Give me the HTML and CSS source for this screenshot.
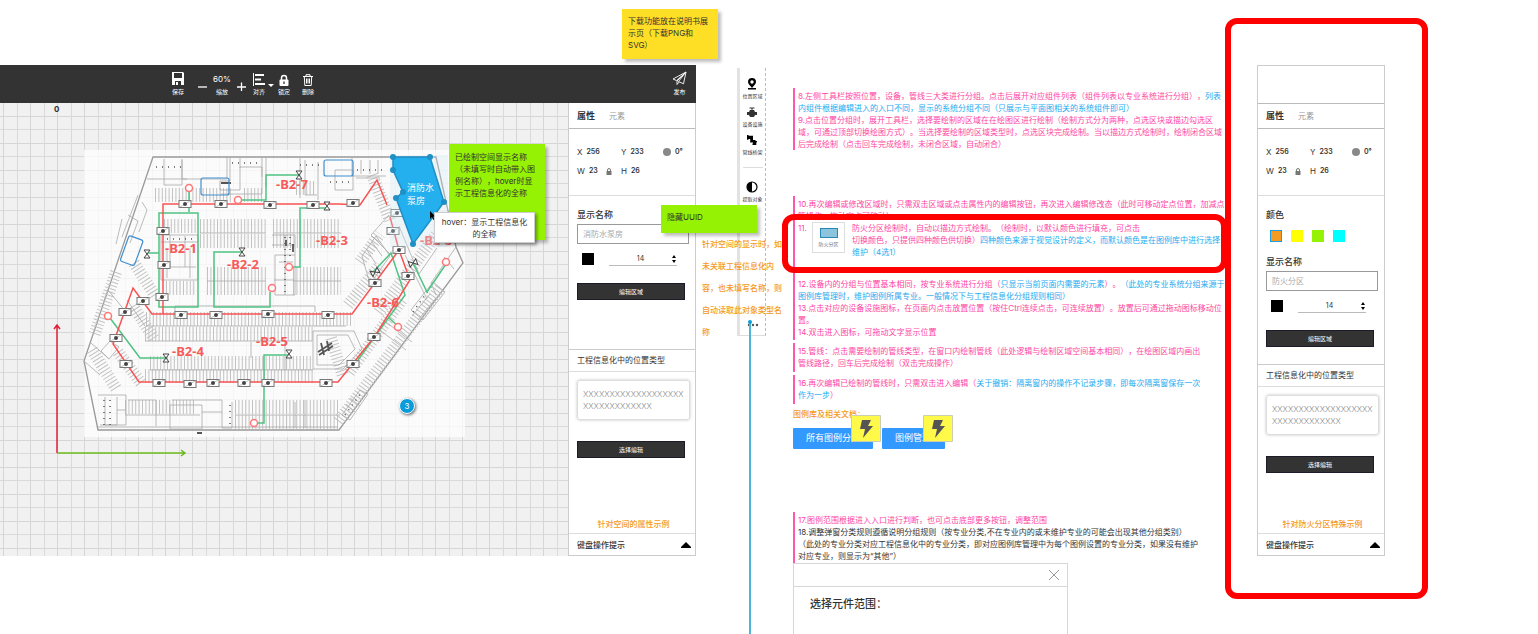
FILE: index.html
```html
<!DOCTYPE html>
<html lang="zh-CN">
<head>
<meta charset="utf-8">
<title>图例编辑器说明</title>
<link rel="stylesheet" href="styles.css">
</head>
<body>
<main class="board">
  <section class="editor">
    <header class="toolbar">
      <button class="tool save"><svg width="14" height="14" viewBox="0 0 14 14"><path fill="#fff" d="M1 0h11l1 1v12H1z"/><path fill="#333" d="M3 1h8v5H3zM4 9h6v4H4z"/><path fill="#fff" d="M5 10h2v3H5z"/></svg><span>保存</span></button>
      <button class="tool" aria-label="缩小"><svg width="9" height="9" viewBox="0 0 9 9"><path stroke="#fff" stroke-width="1.3" d="M0 5h9"/></svg></button>
      <div class="tool zoom"><output>60%</output><span>缩放</span></div>
      <button class="tool plus" aria-label="放大"><svg width="9" height="9" viewBox="0 0 9 9"><path stroke="#fff" stroke-width="1.3" d="M0 5h9M4.500 .5v9"/></svg></button>
      <button class="tool align"><svg width="14" height="13" viewBox="0 0 14 13"><path stroke="#fff" d="M1.500 0v13"/><path stroke="#fff" stroke-width="2" d="M3 2h9M3 6.500h6M3 11h10"/></svg><span>对齐</span></button>
      <button class="tool caret" aria-label="对齐选项"><svg width="6" height="4" viewBox="0 0 6 4"><path fill="#fff" d="M0 0h6L3 3z"/></svg></button>
      <button class="tool lock"><svg width="12" height="12" viewBox="0 0 12 12"><path fill="none" stroke="#fff" stroke-width="1.500" d="M3.500 6V4a2.500 2.500 0 0 1 5 0v2"/><rect x="1.500" y="5.500" width="9" height="6.500" rx="1" fill="#fff"/><path stroke="#333" stroke-width="1.300" d="M6 7.500v2.500"/></svg><span>锁定</span></button>
      <button class="tool trash"><svg width="12" height="12" viewBox="0 0 12 12"><path fill="none" stroke="#fff" d="M1 2.500h10M4 2.500V.7h4v1.800M2.300 2.500l.5 9h6.400l.5-9M4.500 4.500v5M6 4.500v5M7.500 4.500v5"/></svg><span>删除</span></button>
      <button class="tool publish"><svg width="15" height="15" viewBox="0 0 15 15"><path fill="none" stroke="#fff" stroke-width=".9" stroke-linejoin="round" d="M14 1 1 8l3.500 1.600L14 1 6.500 10.500l5 2.300L14 1 5 10v3.500l2.200-2.500"/></svg><span>发布</span></button>
    </header>
    <div class="workspace">
      <div class="canvas">
        <svg class="plan" viewBox="0 103 568 453" width="568" height="453">
          <defs>
            <g id="box"><rect x="-6" y="-3.500" width="12" height="7" fill="#fff" stroke="#777"/><path d="M-6 3.500 6-3.500" stroke="#999" stroke-width=".6"/><circle r="2" fill="#444"/></g>
            <g id="valve" fill="#fff" stroke="#444"><path d="M-3-4h6L-3 4h6z"/></g>
            <circle id="ring" r="3.500" fill="#fff" stroke="#f77" stroke-width="1.500"/>
          </defs>
          <rect x="84" y="150" width="381" height="287" fill="#fff" opacity=".72"/>
          <g fill="none" stroke="#aaa">
            <path stroke="#999" stroke-width="1.300" d="M153 157H436L456 247l7 16L339 430H98L84 361z"/>
            <g stroke="#c2c2c2" stroke-dasharray="1 2.400">
              <path stroke-width="14" d="M155 195h77M244 195h18M296 188h20M200 226h66M200 241h66M273 226h68M273 241h68M207 274h59M207 288h59M293 274h48M293 288h48M166 288h30M146 319h206M145 334h168M150 363h163M145 376h168M125 407h70M235 407h105M235 422h103M164 226h32"/>
              <path stroke-width="12" d="M134 263l22 34M116 272l-22 64M133 306l22 34M118 352l23 31M92 350l25 40M372 175l18 45M360 262l20-28M348 305l32-40M436 235l-58 78M402 300l-54 74M440 288l-102 134M331 338l12 38"/>
            </g>
            <g stroke="#aaa" stroke-width=".8">
              <path d="M164 159v26h18v-26M147 179h40M182 160v19h45v-22M230 157v24h-10v9h20v-23h22v27h-41M240 168v-10M262 157v20M266 157v30M300 158v40M305 160v35h12M318 162v38M335 170h18v20h-18zM352 158v18h34M356 178h24M361 160v14M370 160v14M378 160v14"/>
              <path d="M161 235h37v45h-37zM161 242h37M170 235v32h26M185 236v31M167 248v30M190 248v30M272 235h23v60h-20v-40h20M272 245h23M285 235v60M279 262h14M274 280h20"/>
              <path d="M200 233h66M273 233h68M207 281h59M293 281h48M146 326h200M145 341h167M150 370h163M125 415h75M235 415h105M98 427h240M175 312v-6h140v6M251 342v16M285 342v28M145 326l-18-26"/>
              <path d="M98 395h28v30h-26M105 397v28h12v-28M117 410h8M128 400h28v26M170 405h32v24h-32zM172 400h50v28h10v-26M222 412h-20M295 402v26M305 400v28M110 341l9 6-10 12-8-8zM91 343l17 15M84 361l16 14M108 290l18 22M138 195l-16 42M142 202l5 8-8 22M128 215l10 6-8 22M122 219l-6 25"/>
              <path d="M313 331h41l8 18-19 20h-30zM317 335h31l7 14-16 16h-22zM362 256l14-20 14 20-20 28zM372 242l10 14M367 250l9 14M389 215l-18 20 20 20M399 226l20 48 18-26M405 255l22 44M411 310l22-28 12 10-22 28zM412 316l18-22M418 320l18-22M456 247l-25 36 5 12M444 257l10 12M360 390l-18 25 8 5 18-26zM350 398l10 8M346 404l9 8M380 330l26 20M386 322l26 20"/>
            </g>
            <g stroke="#555" stroke-width="1.500">
              <path stroke-dasharray="1 5" d="M156 167h25M232 163h30M300 165h20M330 182h22M104 400v26M110 400v26M230 405v20M357 170h25M285 237v56M290 237v20M413 312l20-28M345 415l16-22M167 239h26"/>
              <path d="M318 352l14-9M319 355l14-9M321 343l3 12M327 341l2 10M286 240v6M293 244v8M221 183h10M197 433h5" stroke-width="1.800"/>
            </g>
          </g>
          <g fill="none" stroke="#3f8dcf" stroke-width="1.200">
            <rect x="201" y="178" width="28" height="17" rx="2"/><rect x="324" y="160" width="29" height="16" rx="2"/><rect x="-7" y="-14" width="15" height="27" rx="2" transform="translate(131 251) rotate(20)"/>
          </g>
          <g fill="none" stroke="#4fc383" stroke-width="1.500">
            <path d="M189 190v22M159 213h39v94h-39zM147 253h12M242 252h-28v55h56v-15M299 175h-33v25h-26M327 208h-27v59h-9M110 318l30 40h26M289 355h-25v68h-8M373 272l18-19 14 42-47 65M389 318l9 8M413 263l14 29 19-28"/>
          </g>
          <g fill="none" stroke="#f75353" stroke-width="1.500">
            <path d="M163 314V204h176l21 1 17-25 10 25M390 217l9 33 11 30-35 56-37 46H139l-26-38 20-56 19 26h200l47-64"/>
          </g>
          <g>
            <use href="#box" x="185" y="204"/><use href="#box" x="221" y="204"/><use href="#box" x="270" y="205"/><use href="#box" x="313" y="205"/><use href="#box" x="353" y="203"/><use href="#box" x="163" y="231"/><use href="#box" x="164" y="265"/><use href="#box" x="162" y="297"/><use href="#box" x="143" y="301"/><use href="#box" x="125" y="312"/><use href="#box" x="116" y="338"/><use href="#box" x="126" y="364"/><use href="#box" x="181" y="315"/><use href="#box" x="216" y="315"/><use href="#box" x="268" y="314"/><use href="#box" x="328" y="315"/><use href="#box" x="159" y="383"/><use href="#box" x="190" y="384"/><use href="#box" x="213" y="383"/><use href="#box" x="244" y="383"/><use href="#box" x="268" y="383"/><use href="#box" x="326" y="383"/><use href="#box" x="397" y="213"/><use href="#box" x="393" y="231"/><use href="#box" x="399" y="250"/><use href="#box" x="408" y="276"/><use href="#box" x="375" y="283"/><use href="#box" x="374" y="337"/><use href="#box" x="353" y="364"/>
            <use href="#valve" x="147" y="254"/><use href="#valve" x="242" y="252"/><use href="#valve" x="299" y="175"/><use href="#valve" x="327" y="206"/><use href="#valve" x="166" y="358"/><use href="#valve" x="289" y="354"/><use href="#valve" transform="translate(375 272) rotate(60)"/><use href="#valve" transform="translate(413 263) rotate(70)"/>
            <use href="#ring" x="189" y="188"/><use href="#ring" x="238" y="200"/><use href="#ring" x="289" y="267"/><use href="#ring" x="272" y="288"/><use href="#ring" x="108" y="316"/><use href="#ring" x="254" y="423"/><use href="#ring" x="398" y="327"/><use href="#ring" x="446" y="262"/>
          </g>
          <g class="zone-label">
            <text x="276" y="189">-B2-7</text><text x="165" y="253">-B2-1</text><text x="227" y="269">-B2-2</text><text x="316" y="245">-B2-3</text><text x="172" y="356">-B2-4</text><text x="256" y="346">-B2-5</text><text x="367" y="307">-B2-6</text><text x="420" y="245">-B2-8</text>
          </g>
          <rect x="390" y="155" width="58" height="92" fill="#cfe9f5" opacity=".3"/>
          <path d="M393 157h37l14 45-31 42-17-46 7-6-10-22z" fill="#24afee" stroke="#1f8fc4" stroke-width="1.500"/>
          <g fill="#1f8fc4"><circle cx="393" cy="157" r="3"/><circle cx="430" cy="157" r="3"/><circle cx="444" cy="202" r="3"/><circle cx="413" cy="244" r="3"/><circle cx="396" cy="198" r="3"/><circle cx="403" cy="192" r="3"/><circle cx="393" cy="170" r="3"/></g>
          <g class="room-label"><text x="407" y="191">消防水</text><text x="407" y="204">泵房</text></g>
          <path fill="none" stroke="#e0203a" stroke-width="1.500" d="M57 453V326M54 329l3-4 3 4"/>
          <path fill="none" stroke="#6cba1c" stroke-width="1.500" d="M57 453h127M181 450l4 3-4 3"/>
          <text class="origin" x="54" y="112">0</text>
          <path d="M430 211v8l2-2 1.500 3 1-.6-1.400-2.700h2.500z"/>
        </svg>
        <p class="sticky green tip-note">已绘制空间显示名称<br>（未填写时自动带入图<br>例名称），hover时显<br>示工程信息化的全称</p>
        <div class="tooltip">hover：显示工程信息化<br>的全称</div>
        <span class="marker">3</span>
      </div>
      <aside class="panel">
        <nav class="tabs"><button class="tab active">属性</button><button class="tab">元素</button></nav>
        <div class="geometry">
          <span>X <b>256</b></span><span>Y <b>233</b></span><span><i class="dot"></i><b>0°</b></span>
          <span>W <b>23</b><svg class="padlock" width="6" height="7" viewBox="0 0 6 7"><path fill="none" stroke="#777" d="M1.500 3V2a1.500 1.500 0 0 1 3 0v1"/><path fill="#777" d="M.5 3h5v4h-5z"/></svg></span><span>H <b>26</b></span>
        </div>
        <div class="fields">
          <label class="caption" for="name-a">显示名称</label>
          <input class="name" id="name-a" placeholder="消防水泵房">
          <div class="type-row"><button class="ink" aria-label="文字颜色"></button><div class="size"><input aria-label="字号" value="14"><svg width="4" height="8" viewBox="0 0 4 8"><path d="M0 3h4L2 0zM0 5h4L2 8z"/></svg></div></div>
          <button class="dark">编辑区域</button>
        </div>
        <label class="band" for="type-a">工程信息化中的位置类型</label>
        <div class="kind">
          <textarea id="type-a">XXXXXXXXXXXXXXXXXXX
XXXXXXXXXXXXX</textarea>
          <button class="dark">选择编辑</button>
          <p class="example">针对空间的属性示例</p>
        </div>
        <button class="shortcuts">键盘操作提示<svg width="10" height="6" viewBox="0 0 10 6"><path d="M0 6V5l5-5 5 5v1z"/></svg></button>
      </aside>
    </div>
    <p class="sticky yellow">下载功能放在说明书展<br>示页（下载PNG和<br>SVG）</p>
  </section>

  <section class="strip">
    <div class="strip-box">
      <button><svg width="10" height="12" viewBox="0 0 10 12"><path d="M5 0a4 4 0 0 1 4 4c0 2-2.500 4-4 6C3.500 8 1 6 1 4a4 4 0 0 1 4-4z"/><circle cx="5" cy="4" r="1.700" fill="#fff"/><path d="M1 10h8v1.500H1z"/></svg>位置区域</button>
      <button><svg width="10" height="12" viewBox="0 0 10 12"><path fill="#333" d="M2.500 1.500h5v1h-2V4H7l1 2h2v3H8l-1 2H3L2 9H0V6h2l1-2h1.500V2.500h-2z"/></svg>设备设施</button>
      <button><svg width="10" height="12" viewBox="0 0 10 12"><path d="M0 1h1.500v.7H6V6h2.500v1H10v1.200h-.7V11H5.500V9.500H6V8.500H3.200V5H1.500v.7H0z"/></svg>管线桥架</button>
      <hr>
      <button><svg width="12" height="12" viewBox="0 0 12 12"><circle cx="6" cy="6" r="5" fill="#fff" stroke="#000" stroke-width="1.200"/><path d="M6 1a5 5 0 0 0 0 10z"/></svg>提取对象</button>
      <button class="more" aria-label="更多"><svg width="12" height="4" viewBox="0 0 12 4"><circle cx="2" cy="2" r="1.200" fill="#555"/><circle cx="6" cy="2" r="1.200" fill="#555"/><circle cx="10" cy="2" r="1.200" fill="#555"/></svg></button>
    </div>
    <i class="connector"></i>
    <p class="sticky green uuid">隐藏UUID</p>
    <p class="remark">针对空间的显示时，如<br>未关联工程信息化内<br>容，也未填写名称，则<br>自动读取此对象类型名<br>称</p>
  </section>

  <article class="notes">
    <div class="note first">8.左侧工具栏按照位置，设备，管线三大类进行分组。点击后展开对应组件列表（组件列表以专业系统进行分组），<em>列表<br>内组件根据编辑进入的入口不同，显示的系统分组不同（只展示与平面图相关的系统组件即可）</em><br>9.点击位置分组时，展开工具栏，选择要绘制的区域在在绘图区进行绘制（绘制方式分为两种，点选区块或描边勾选区<br>域，可通过顶部切换绘图方式）。当选择要绘制的区域类型时，点选区块完成绘制。当以描边方式绘制时，绘制闭合区域<br>后完成绘制（点击回车完成绘制，未闭合区域，自动闭合）</div>
    <div class="note second">
      <p>10.再次编辑或修改区域时，只需双击区域或点击属性内的编辑按钮，再次进入编辑修改态（此时可移动定点位置，加减点<br>等操作，拖动定点可移动）</p>
      <div class="item">
        <span class="num">11.</span>
        <figure class="thumb"><i></i><figcaption>防火分区</figcaption></figure>
        <p>防火分区绘制时，自动以描边方式绘制。（绘制时，以默认颜色进行填充，可点击<br>切换颜色，只提供四种颜色供切换）<em>四种颜色来源于视觉设计的定义，而默认颜色是在图例库中进行选择<br>维护（4选1）</em></p>
        <i class="frame"></i>
      </div>
      <p>12.设备内的分组与位置基本相同，按专业系统进行分组（<em>只显示当前页面内需要的元素</em>）。<em>（此处的专业系统分组来源于<br>图例库管理时，维护图例所属专业。一般情况下与工程信息化分组规则相同）</em><br>13.点击对应的设备设施图标，在页面内点击放置位置（按住Ctrl连续点击，可连续放置）。放置后可通过拖动图标移动位<br>置。<br>14.双击进入图标，可拖动文字显示位置</p>
    </div>
    <div class="note short">15.管线：点击需要绘制的管线类型，在窗口内绘制管线（此处逻辑与绘制区域空间基本相同），在绘图区域内画出<br>管线路径，回车后完成绘制（双击完成操作）</div>
    <div class="note short">16.再次编辑已绘制的管线时，只需双击进入编辑（<em>关于撤销：隔离窗内的操作不记录步骤，即每次隔离窗保存一次<br>作为一步</em>）</div>
    <p class="docs">图例库及相关文档：</p>
    <div class="links">
      <a href="#all" class="wide">所有图例分类<svg class="bolt" width="30" height="27" viewBox="0 0 30 27"><path fill="#fff94a" stroke="#cdcdb4" d="M.5.5h29v26H.5z"/><path fill="#555" d="M11 5h9l-3 6h5L12 23l2-9H9z"/></svg></a>
      <a href="#manage">图例管理<svg class="bolt" width="30" height="27" viewBox="0 0 30 27"><path fill="#fff94a" stroke="#cdcdb4" d="M.5.5h29v26H.5z"/><path fill="#555" d="M11 5h9l-3 6h5L12 23l2-9H9z"/></svg></a>
    </div>
    <div class="note last">17.图例范围根据进入入口进行判断，也可点击底部更多按钮，调整范围<br><span class="plain">18.调整弹窗分类规则遵循说明分组规则（按专业分类,不在专业内的或未维护专业的可能会出现其他分组类别）<br>（此处的专业分类对应工程信息化中的专业分类，即对应图例库管理中为每个图例设置的专业分类，如果没有维护<br>对应专业，则显示为“其他”）</span></div>
    <div class="dialog">
      <header><button aria-label="关闭"><svg width="10" height="10" viewBox="0 0 10 10"><path stroke="#999" d="M0 0l10 10M10 0 0 10"/></svg></button></header>
      <h2>选择元件范围：</h2>
    </div>
  </article>

  <section class="variant">
    <i class="frame tall"></i>
    <aside class="panel boxed">
      <div class="blank"></div>
      <nav class="tabs"><button class="tab active">属性</button><button class="tab">元素</button></nav>
      <div class="geometry">
        <span>X <b>256</b></span><span>Y <b>233</b></span><span><i class="dot"></i><b>0°</b></span>
        <span>W <b>23</b><svg class="padlock" width="6" height="7" viewBox="0 0 6 7"><path fill="none" stroke="#777" d="M1.500 3V2a1.500 1.500 0 0 1 3 0v1"/><path fill="#777" d="M.5 3h5v4h-5z"/></svg></span><span>H <b>26</b></span>
      </div>
      <div class="fields colored">
        <span class="caption">颜色</span>
        <div class="swatches">
          <input type="radio" name="fill" class="orange" aria-label="橙色" checked><input type="radio" name="fill" class="lemon" aria-label="黄色"><input type="radio" name="fill" class="lime" aria-label="绿色"><input type="radio" name="fill" class="cyan" aria-label="青色">
        </div>
        <label class="caption" for="name-b">显示名称</label>
        <input class="name" id="name-b" placeholder="防火分区">
        <div class="type-row"><button class="ink" aria-label="文字颜色"></button><div class="size"><input aria-label="字号" value="14"><svg width="4" height="8" viewBox="0 0 4 8"><path d="M0 3h4L2 0zM0 5h4L2 8z"/></svg></div></div>
        <button class="dark">编辑区域</button>
      </div>
      <label class="band" for="type-b">工程信息化中的位置类型</label>
      <div class="kind">
        <textarea id="type-b">XXXXXXXXXXXXXXXXXXX
XXXXXXXXXXXXX</textarea>
        <button class="dark">选择编辑</button>
        <p class="example">针对防火分区特殊示例</p>
      </div>
      <button class="shortcuts">键盘操作提示<svg width="10" height="6" viewBox="0 0 10 6"><path d="M0 6V5l5-5 5 5v1z"/></svg></button>
    </aside>
  </section>
</main>
</body>
</html>
```

FILE: styles.css
```css
* { box-sizing: border-box; }
body {
  margin: 0;
  background: #fff;
  color: #333;
  font: 8px/12px Inter, "Noto Sans CJK SC", sans-serif;
  text-spacing-trim: space-all;
  overflow-x: hidden;
}
p, h2, figure { margin: 0; }
em, i { font-style: normal; }
svg { display: block; flex: none; }
button, input, textarea { font: inherit; color: inherit; margin: 0; padding: 0; border: 0; background: none; border-radius: 0; outline: 0; }

.board {
  display: grid;
  grid-template-columns: minmax(0, 1fr) 29px 491px 128px;
  min-height: 100vh;
  padding-right: 153px;
}

/* Editor */
.editor { position: relative; padding-top: 65px; margin-right: 41px; }
.toolbar { display: flex; gap: 6px; height: 38px; padding: 5px 9px 0 171px; background: #333; color: #fff; }
.tool { display: flex; flex-direction: column; align-items: center; font-size: 6px; line-height: 8px; height: 26px; justify-content: flex-end; flex: none; gap: 2px; white-space: nowrap; }
.tool[aria-label] { justify-content: center; padding-top: 6px; }
.save { margin-right: 7px; width: 14px; }
.zoom { width: 18px; gap: 3px; }
.zoom output { font-size: 8px; line-height: 12px; }
.align { width: 14px; }
.tool.caret { margin: 0 -2px 0 -4px; }
.trash { margin-left: 6px; }
.publish { margin-left: auto; }
.workspace { display: flex; }
.canvas {
  position: relative;
  flex: 1;
  min-width: 0;
  overflow: hidden;
  background-color: #f1f1f1;
  background-image:
    linear-gradient(90deg, transparent 3px, #d6d6d6 3px, #d6d6d6 4px, transparent 4px, transparent 17px, #dadada 17px, #dadada 18px, transparent 18px),
    linear-gradient(transparent 13px, #d6d6d6 13px, #d6d6d6 14px, transparent 14px, transparent 26px, #dadada 26px);
  background-size: 27px 27px;
}
.zone-label { font: bold 13px "Noto Sans", sans-serif; fill: #f75a5a; }
.room-label { font-size: 9px; fill: #fff; }
.origin { font-size: 8px; font-weight: 700; fill: #333; }
.sticky { position: absolute; padding: 6px; width: 96px; white-space: nowrap; box-shadow: 3px 3px 3px rgba(0, 0, 0, .25); z-index: 2; }
.green { background: #95f204; }
.yellow { background: #ffdf25; top: 9px; right: -22px; height: 50px; }
.tip-note { left: 449px; top: 41px; height: 96px; padding-top: 7px; }
.tooltip { position: absolute; z-index: 3; left: 434px; top: 109px; width: 101px; padding: 3px 0 2px; border: 1px solid #ccc; background: #fff; text-align: center; box-shadow: 2px 2px 3px rgba(0, 0, 0, .4); white-space: nowrap; }
.marker { position: absolute; left: 399px; top: 295px; width: 16px; height: 16px; border-radius: 50%; border: 1px solid #fff; background: #0a9bdb; color: #fff; text-align: center; line-height: 14px; box-shadow: 1px 1px 3px rgba(0, 0, 0, .6); }

/* Property panel */
.panel { display: flex; flex-direction: column; width: 128px; height: 453px; flex: none; border: 1px solid #ccc; border-top: 0; background: #fff; white-space: nowrap; }
.boxed { height: 491px; border-top: 1px solid #ccc; margin-top: 65px; }
.blank { height: 38px; border-bottom: 1px solid #bbb; flex: none; }
.tabs { display: flex; align-items: center; gap: 14px; height: 26px; padding: 0 8px; border-bottom: 1px solid #bbb; flex: none; }
.boxed .tabs { height: 25px; }
.tab { color: #999; }
.tab.active { font-size: 9px; font-weight: 700; color: #333; }
.geometry { display: grid; grid-template-columns: 44px 42px 1fr; grid-auto-rows: 12px; row-gap: 7px; height: 67px; padding: 17px 0 0 8px; border-bottom: 1px solid #ddd; flex: none; }
.geometry span { display: flex; align-items: center; gap: 4px; }
.geometry b { font-size: 7px; font-weight: 600; }
.geometry .padlock { margin-left: 4px; }
.dot { width: 8px; height: 8px; border-radius: 50%; background: #888; }
.fields { display: flex; flex-direction: column; height: 153px; padding: 13px 6px 0 8px; flex: none; }
.fields.colored { height: 168px; }
.caption { font-size: 9px; font-weight: 500; }
.swatches { display: flex; gap: 9px; padding: 9px 0 14px 4px; }
.swatches input { appearance: none; width: 12px; height: 12px; }
.swatches input:checked { border: 1px solid #1e9fe0; }
.orange { background: #f59a23; }
.lemon { background: #ff0; }
.lime { background: #95f204; }
.cyan { background: #0ff; }
.name { width: 100%; height: 20px; margin-top: 3px; padding: 0 5px; border: 1px solid #999; }
.name::placeholder { color: #aaa; opacity: 1; }
.type-row { display: flex; gap: 15px; padding: 9px 12px 0 5px; }
.ink { width: 12px; height: 12px; background: #000; flex: none; }
.size { display: flex; align-items: center; flex: 1; min-width: 0; height: 13px; border-bottom: 1px solid #bbb; padding-right: 1px; }
.size input { flex: 1; width: 0; min-width: 0; text-align: center; font-size: 7px; height: 10px; }
.dark { width: 108px; height: 17px; background: #333; border: 1px solid #1b1b2a; color: #fff; font-size: 6px; flex: none; }
.fields .dark { margin-top: 17px; }
.band { height: 23px; padding-left: 8px; line-height: 21px; border-top: 1px solid #ccc; border-bottom: 1px solid #ddd; flex: none; }
.kind { display: flex; flex-direction: column; flex: 1; padding: 8px 5px 3px 8px; }
.kind textarea { width: 113px; height: 40px; padding: 7px 5px; resize: none; overflow: hidden; white-space: pre; font-weight: 300; color: #888; border: 1px solid #ddd; border-radius: 3px; box-shadow: 0 0 3px rgba(0, 0, 0, .25); }
.kind .dark { margin-top: 21px; }
.example { margin-top: auto; text-align: center; color: #f59a23; font-weight: 500; }
.shortcuts { display: flex; align-items: center; justify-content: space-between; height: 22px; padding: 0 4px 0 8px; border-top: 1px solid #ddd; font-weight: 500; flex: none; }

/* Component strip */
.strip { position: relative; margin-top: 68px; }
.strip-box { display: flex; flex-direction: column; align-items: center; height: 268px; padding-top: 10px; border-left: 3px solid #e2e2e2; border-right: 1px dashed #c9b8aa; border-bottom: 1px solid #ddd; }
.strip button { display: flex; flex-direction: column; align-items: center; gap: 2px; height: 28px; font-size: 5px; line-height: 8px; white-space: nowrap; flex: none; }
.strip hr { width: 20px; margin: 5px 0 13px; border: 0; border-top: 1px solid #ddd; }
.strip .more { margin-top: auto; height: 12px; }
.connector { position: absolute; left: 12px; top: 254px; bottom: 0; width: 2px; background: #4bb7d8; }
.connector::before { content: ""; position: absolute; left: -1px; top: -2px; width: 4px; height: 4px; border-radius: 50%; background: #0a9bdb; }
.uuid { right: 9px; top: 137px; height: 28px; }
.remark { position: absolute; left: -35px; top: 165px; line-height: 22px; white-space: nowrap; color: #f59a23; font-weight: 500; }

/* Notes */
.notes { display: flex; flex-direction: column; margin: 0 40px 0 27px; padding-top: 88px; white-space: nowrap; }
.note { border-left: 2px solid #ff57ad; padding: 2px 0 0 3px; color: #ff45a4; flex: none; }
.note em { color: #1eaaf0; }
.first { height: 62px; }
.second { height: 144px; margin: 46px 0 3px; }
.item { position: relative; display: flex; height: 56px; }
.num { width: 14px; flex: none; }
.thumb { display: flex; flex-direction: column; align-items: center; width: 33px; height: 31px; flex: none; padding-top: 5px; border: 1px solid #ddd; font-size: 5px; color: #777; background: #fff; }
.thumb i { width: 18px; height: 10px; border: 1px solid #2a86b5; background: #8cc4de; }
.item p { margin-left: 7px; }
.frame { position: absolute; z-index: 4; left: -16px; right: -10px; top: -8px; height: 59px; border: 6px solid red; border-radius: 12px; pointer-events: none; }
.short { height: 29px; margin-bottom: 3px; }
.docs { margin-top: 1px; color: #f59a23; font-weight: 500; }
.links { display: flex; gap: 9px; margin: 8px 0 63px; }
.links a { position: relative; height: 21px; width: 63px; padding-left: 13px; line-height: 20px; font-size: 9px; background: #39f; border-radius: 1px; color: #fff; text-decoration: none; }
.links .wide { width: 80px; }
.bolt { position: absolute; right: -8px; top: -13px; }
.last { height: 51px; }
.plain { color: #333; }
.dialog { width: 275px; flex: 1; min-height: 71px; border: 1px solid #d7d7d7; border-bottom: 0; }
.dialog header { display: flex; justify-content: flex-end; align-items: center; height: 23px; padding-right: 8px; border-bottom: 1px solid #d7d7d7; }
.dialog h2 { padding: 9px 16px; font-size: 11px; line-height: 16px; font-weight: 500; }

/* Fire-zone variant */
.variant { position: relative; }
.frame.tall { left: -32px; right: -43px; top: 18px; height: 581px; }
```
